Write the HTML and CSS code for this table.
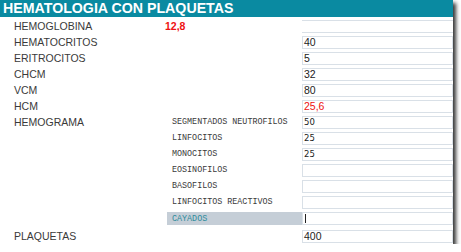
FILE: index.html
```html
<!DOCTYPE html>
<html>
<head>
<meta charset="utf-8">
<link rel="stylesheet" href="styles.css">
</head>
<body>
<div class="panel">
  <div class="header">HEMATOLOGIA CON PLAQUETAS</div>
  <div class="row">
    <div class="label">HEMOGLOBINA</div>
    <div class="mid"><span class="val">12,8</span></div>
    <div class="field"><div class="lines"></div></div>
  </div>
  <div class="row">
    <div class="label">HEMATOCRITOS</div>
    <div class="mid"></div>
    <div class="field"><div class="box">40</div></div>
  </div>
  <div class="row">
    <div class="label">ERITROCITOS</div>
    <div class="mid"></div>
    <div class="field"><div class="box">5</div></div>
  </div>
  <div class="row">
    <div class="label">CHCM</div>
    <div class="mid"></div>
    <div class="field"><div class="box">32</div></div>
  </div>
  <div class="row">
    <div class="label">VCM</div>
    <div class="mid"></div>
    <div class="field"><div class="box">80</div></div>
  </div>
  <div class="row">
    <div class="label">HCM</div>
    <div class="mid"></div>
    <div class="field"><div class="box red">25,6</div></div>
  </div>
  <div class="row">
    <div class="label">HEMOGRAMA</div>
    <div class="mid sub">SEGMENTADOS NEUTROFILOS</div>
    <div class="field"><div class="box small">50</div></div>
  </div>
  <div class="row">
    <div class="label"></div>
    <div class="mid sub">LINFOCITOS</div>
    <div class="field"><div class="box small">25</div></div>
  </div>
  <div class="row">
    <div class="label"></div>
    <div class="mid sub">MONOCITOS</div>
    <div class="field"><div class="box small">25</div></div>
  </div>
  <div class="row">
    <div class="label"></div>
    <div class="mid sub">EOSINOFILOS</div>
    <div class="field"><div class="box small"></div></div>
  </div>
  <div class="row">
    <div class="label"></div>
    <div class="mid sub">BASOFILOS</div>
    <div class="field"><div class="box small"></div></div>
  </div>
  <div class="row">
    <div class="label"></div>
    <div class="mid sub">LINFOCITOS REACTIVOS</div>
    <div class="field"><div class="box small"></div></div>
  </div>
  <div class="row">
    <div class="label"></div>
    <div class="mid sub active">CAYADOS</div>
    <div class="field"><div class="box small"><span class="caret"></span></div></div>
  </div>
  <div class="row last">
    <div class="label">PLAQUETAS</div>
    <div class="mid"></div>
    <div class="field"><div class="box">400</div></div>
  </div>
</div>
</body>
</html>
```
FILE: styles.css
```css
html, body {
  margin: 0;
  padding: 0;
  background: #ffffff;
}
.panel {
  width: 453px;
  height: 244px;
  background: #ffffff;
  box-shadow: 3px 3px 4px rgba(30, 30, 30, 0.9);
  font-family: "Liberation Sans", Arial, sans-serif;
  overflow: hidden;
}
.header {
  height: 17px;
  line-height: 17px;
  background: #0a8aa1;
  color: #ffffff;
  font-weight: bold;
  font-size: 14.2px;
  padding-left: 3px;
  margin-bottom: 1px;
  white-space: nowrap;
}
.row {
  display: flex;
  height: 16px;
  align-items: center;
}
.row.last {
  margin-top: 2px;
}
.label {
  width: 151px;
  padding-left: 14px;
  font-size: 10.5px;
  color: #3a3a3a;
  box-sizing: border-box;
  flex: none;
}
.mid {
  width: 151px;
  flex: none;
  box-sizing: border-box;
  display: flex;
  align-items: center;
  height: 16px;
}
.val {
  margin-left: 14px;
  color: #ee1111;
  font-weight: bold;
  font-size: 10.5px;
}
.sub {
  font-family: "Liberation Mono", "Courier New", monospace;
  font-size: 8.4px;
  color: #3a3a3a;
  padding-left: 21px;
}
.sub.active {
  background: #c5ced7;
  color: #2e8c9c;
  margin-left: 16px;
  padding-left: 5px;
  width: 135px;
  height: 13px;
  margin-top: 1px;
}
.field {
  width: 151px;
  flex: none;
  height: 16px;
  display: flex;
  align-items: center;
}
.box {
  width: 151px;
  height: 13px;
  box-sizing: border-box;
  border: 1px solid #d9e0e7;
  font-size: 10.5px;
  line-height: 11px;
  color: #222222;
  padding-left: 1px;
  display: flex;
  align-items: center;
}
.box.red {
  color: #ee1111;
}
.box.small {
  font-family: Tahoma, "DejaVu Sans", sans-serif;
  font-size: 8.5px;
  color: #222222;
}
.lines {
  width: 151px;
  height: 13px;
  box-sizing: border-box;
  border-top: 1px solid #d9e0e7;
  border-bottom: 1px solid #d9e0e7;
}
.caret {
  display: block;
  width: 1px;
  height: 9px;
  background: #222222;
  margin-left: 1px;
}
```
